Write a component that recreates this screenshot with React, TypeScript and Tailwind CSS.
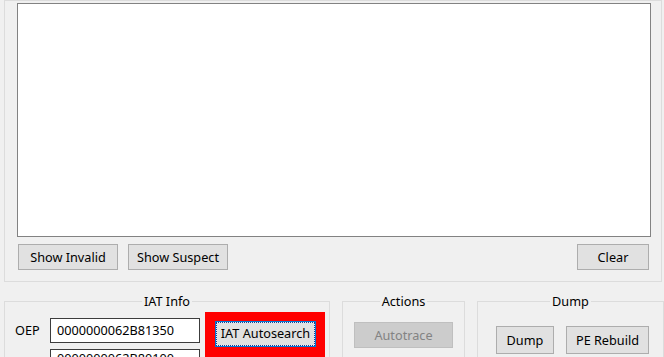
const font = { fontFamily: '"Noto Sans", "Open Sans", sans-serif' };

const WinButton = ({ label, className = "", disabled = false }: { label: string; className?: string; disabled?: boolean }) => (
    <button
        disabled={disabled}
        className={`flex items-center justify-center border text-[12.7px] leading-none ${disabled ? "bg-[#cccccc] border-[#bfbfbf] text-[#838383]" : "bg-[#e1e1e1] border-[#adadad] text-black"} ${className}`}
    >
        {label}
    </button>
);

const GroupBox = ({ title, className = "", children }: { title: string; className?: string; children: React.ReactNode }) => (
    <fieldset className={`border border-[#dcdcdc] m-0 p-0 ${className}`}>
        <legend className="mx-auto px-[2px] text-[12.7px] leading-[16px] text-black">{title}</legend>
        {children}
    </fieldset>
);

const App = () => {
    return (
        <div className="w-[664px] h-[357px] overflow-hidden bg-[#f0f0f0]" style={font}>
            {/* imports group */}
            <div className="ml-[4px] w-[658px] h-[282px] border border-[#dcdcdc] pt-[2px] pl-[12px]">
                <div className="w-[634px] h-[234px] bg-white border border-[#828282]" />
                <div className="flex items-center mt-[7px] ml-[1px] w-[633px]">
                    <WinButton label="Show Invalid" className="w-[100px] h-[26px] pt-[1px]" />
                    <WinButton label="Show Suspect" className="w-[100px] h-[26px] ml-[10px] pt-[1px]" />
                    <WinButton label="Clear" className="w-[72px] h-[26px] ml-auto mr-[2px] pt-[1px]" />
                </div>
            </div>

            <div className="flex items-start mt-[11px] ml-[4px] gap-[12px]">
                <GroupBox title="IAT Info" className="w-[326px] h-[80px]">
                    <div className="flex items-start pl-[10px] pt-[3px]">
                        <div className="flex flex-col">
                            <div className="flex items-center mt-[6px]">
                                <span className="w-[35px] text-[12.7px] text-black">OEP</span>
                                <div className="w-[150px] h-[25px] bg-white border border-[#3c3c3c] flex items-center pl-[6px] text-[12.7px] text-black">0000000062B81350</div>
                            </div>
                            <div className="flex items-start mt-[6px] ml-[35px]">
                                <div className="w-[150px] h-[25px] bg-white border border-[#3c3c3c] flex items-start pl-[6px] text-[12.7px] leading-[16px] text-black">0000000062B80100</div>
                            </div>
                        </div>
                        <div className="ml-[5px] w-[120px] h-[60px] bg-[#ff0000] pt-[8px] pl-[10px]">
                            <button className="w-[101px] h-[26px] bg-[#e5f1fb] border border-[#0078d7] p-[1px]">
                                <span className="flex items-center justify-center w-full h-full bg-[#e1e1e1] outline-1 outline-dotted outline-[#1f3c8a] text-[12.7px] text-black">IAT Autosearch</span>
                            </button>
                        </div>
                    </div>
                </GroupBox>

                <GroupBox title="Actions" className="w-[123px] h-[80px]">
                    <div className="flex justify-center pt-[13px]">
                        <WinButton label="Autotrace" disabled className="w-[99px] h-[26px]" />
                    </div>
                </GroupBox>

                <GroupBox title="Dump" className="w-[187px] h-[80px]">
                    <div className="flex pt-[17px] pl-[18px] gap-[12px]">
                        <WinButton label="Dump" className="w-[58px] h-[28px]" />
                        <WinButton label="PE Rebuild" className="w-[83px] h-[28px]" />
                    </div>
                </GroupBox>
            </div>
        </div>
    );
};

export default App;
